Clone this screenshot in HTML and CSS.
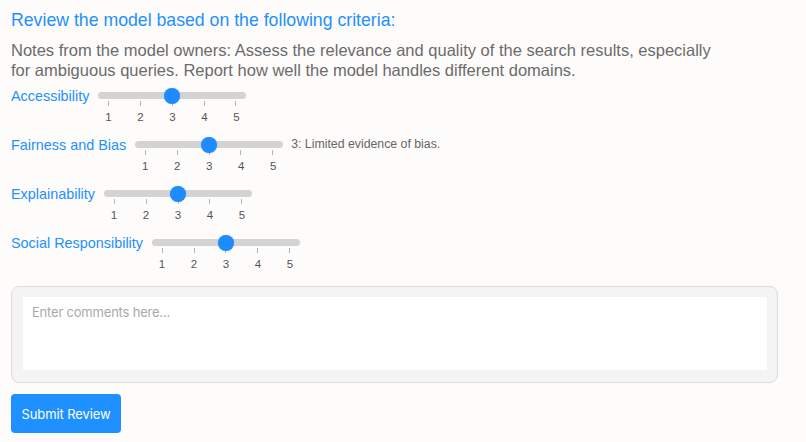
FILE: index.html
```html
<!DOCTYPE html>
<html lang="en">
<head>
<meta charset="utf-8">
<title>Model Review</title>
<link rel="stylesheet" href="styles.css">
</head>
<body>
<div class="review">
  <h2 class="title">Review the model based on the following criteria:</h2>
  <p class="notes">Notes from the model owners: Assess the relevance and quality of the search results, especially for ambiguous queries. Report how well the model handles different domains.</p>

  <div class="criterion">
    <span class="label">Accessibility</span>
    <div class="slider">
      <div class="track"><span class="thumb" style="left: 74px"></span></div>
      <div class="ticks"><span></span><span></span><span></span><span></span><span></span></div>
      <div class="nums"><span>1</span><span>2</span><span>3</span><span>4</span><span>5</span></div>
    </div>
  </div>

  <div class="criterion">
    <span class="label">Fairness and Bias</span>
    <div class="slider">
      <div class="track"><span class="thumb" style="left: 74px"></span></div>
      <div class="ticks"><span></span><span></span><span></span><span></span><span></span></div>
      <div class="nums"><span>1</span><span>2</span><span>3</span><span>4</span><span>5</span></div>
    </div>
    <span class="value">3: Limited evidence of bias.</span>
  </div>

  <div class="criterion">
    <span class="label">Explainability</span>
    <div class="slider">
      <div class="track"><span class="thumb" style="left: 74px"></span></div>
      <div class="ticks"><span></span><span></span><span></span><span></span><span></span></div>
      <div class="nums"><span>1</span><span>2</span><span>3</span><span>4</span><span>5</span></div>
    </div>
  </div>

  <div class="criterion">
    <span class="label">Social Responsibility</span>
    <div class="slider">
      <div class="track"><span class="thumb" style="left: 74px"></span></div>
      <div class="ticks"><span></span><span></span><span></span><span></span><span></span></div>
      <div class="nums"><span>1</span><span>2</span><span>3</span><span>4</span><span>5</span></div>
    </div>
  </div>

  <div class="comments-box">
    <textarea class="comments" placeholder="Enter comments here..."></textarea>
  </div>

  <button class="submit" type="button">Submit Review</button>
</div>
</body>
</html>
```

FILE: styles.css
```css
html, body {
  margin: 0;
  padding: 0;
  background: #fdfcfb;
}

body {
  padding: 10px 11px;
  font-family: "Liberation Sans", Arial, sans-serif;
}

.review {
  width: 767px;
}

.title {
  margin: 0;
  font-size: 17.7px;
  line-height: 20px;
  font-weight: normal;
  color: #1e90ff;
}

.notes {
  margin: 10px 0 0 0;
  max-width: 712px;
  font-size: 16.5px;
  line-height: 20px;
  color: #6b6b6b;
}

.criterion {
  display: flex;
  align-items: flex-start;
  gap: 9px;
  margin-top: 6px;
}

.criterion + .criterion {
  margin-top: 11px;
}

.label {
  font-size: 14.4px;
  line-height: 20px;
  color: #1e90ff;
  white-space: nowrap;
}

.slider {
  width: 148px;
  flex: none;
}

.track {
  position: relative;
  margin-top: 6px;
  height: 7px;
  border-radius: 4px;
  background: #d3d3d3;
}

.thumb {
  position: absolute;
  top: -4.5px;
  width: 16px;
  height: 16px;
  margin-left: -8px;
  border-radius: 50%;
  background: #1e8cff;
  box-shadow: 0 0 1px rgba(30, 140, 255, 0.6);
}

.ticks,
.nums {
  display: flex;
  padding: 0 10px;
  justify-content: space-between;
}

.ticks {
  margin-top: 2px;
  height: 5px;
}

.ticks span {
  width: 1px;
  height: 5px;
  background: #b5b5b5;
}

.nums {
  margin-top: 4px;
  padding: 0 6px;
}

.nums span {
  width: 8px;
  text-align: center;
  font-size: 11.5px;
  line-height: 14px;
  color: #555;
}

.value {
  margin-left: -1px;
  font-size: 12.3px;
  line-height: 18px;
  color: #666;
  white-space: nowrap;
}

.comments-box {
  margin-top: 15px;
  box-sizing: border-box;
  width: 767px;
  height: 97px;
  padding: 10px 10px 12px 11px;
  border: 1px solid #dcdcdc;
  border-radius: 8px;
  background: #f4f4f4;
}

.comments {
  display: block;
  box-sizing: border-box;
  width: 100%;
  height: 73px;
  margin: 0;
  padding: 6px 9px;
  border: none;
  outline: none;
  resize: none;
  background: #fff;
  font-family: Inter, "Noto Sans", sans-serif;
  font-size: 13px;
  letter-spacing: -0.2px;
  line-height: 18px;
  color: #333;
}

.comments::placeholder {
  color: #a9a9a9;
}

.submit {
  display: block;
  margin-top: 11px;
  width: 110px;
  height: 39px;
  padding: 0;
  border: none;
  border-radius: 4px;
  background: #1e90ff;
  color: #fff;
  font-family: Inter, "Noto Sans", sans-serif;
  font-size: 13px;
  letter-spacing: -0.1px;
  cursor: pointer;
}
```
